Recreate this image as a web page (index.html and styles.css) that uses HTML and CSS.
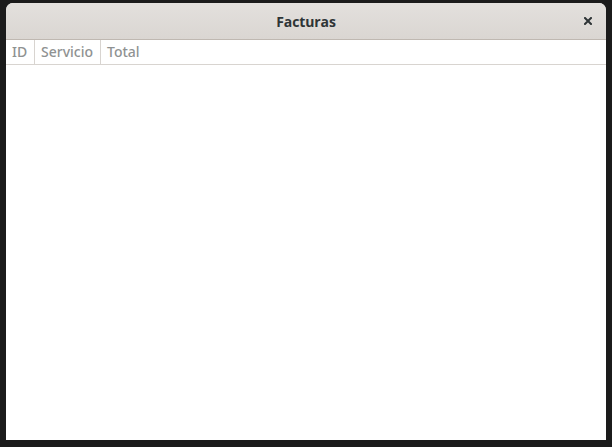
FILE: index.html
```html
<!DOCTYPE html>
<html>
<head>
<meta charset="utf-8">
<link rel="stylesheet" href="styles.css">
</head>
<body>
<div class="desktop">
  <div class="window">
    <div class="titlebar">
      <span class="title">Facturas</span>
      <button class="close" aria-label="Cerrar">
        <svg width="8" height="8" viewBox="0 0 8 8"><path d="M1 1 L7 7 M7 1 L1 7" stroke="#2e3436" stroke-width="2" stroke-linecap="square"/></svg>
      </button>
    </div>
    <div class="table">
      <div class="thead">
        <div class="th col-id">ID</div>
        <div class="th col-serv">Servicio</div>
        <div class="th col-total">Total</div>
      </div>
      <div class="tbody"></div>
    </div>
  </div>
</div>
</body>
</html>
```
FILE: styles.css
```css
html, body {
  margin: 0;
  padding: 0;
  width: 612px;
  height: 447px;
  overflow: hidden;
  background: #1b1b1b;
}
.desktop {
  padding: 3px 6px 7px 6px;
  height: 447px;
  box-sizing: border-box;
}
.window {
  width: 600px;
  height: 437px;
  display: flex;
  flex-direction: column;
  background: #ffffff;
  border-radius: 7px 7px 0 0;
  overflow: hidden;
}
.titlebar {
  height: 36px;
  flex: none;
  display: flex;
  align-items: center;
  justify-content: center;
  position: relative;
  background: linear-gradient(#e3e0dd, #dad6d2);
  border-bottom: 1px solid #bfb8b1;
}
.title {
  font-family: "Open Sans", "DejaVu Sans", sans-serif;
  font-weight: 700;
  font-size: 14px;
  color: #2e3436;
  letter-spacing: -0.1px;
}
.close {
  position: absolute;
  right: 14px;
  top: 14px;
  width: 8px;
  height: 8px;
  padding: 0;
  border: 0;
  background: none;
  display: flex;
}
.table {
  flex: 1;
  display: flex;
  flex-direction: column;
}
.thead {
  height: 24px;
  display: flex;
  border-bottom: 1px solid #d8d4d0;
  box-sizing: content-box;
}
.th {
  font-family: "Noto Sans", "Open Sans", sans-serif;
  font-weight: 500;
  font-size: 14px;
  color: #8f9292;
  line-height: 24px;
  padding-left: 6px;
  box-sizing: border-box;
}
.col-id {
  width: 29px;
  border-right: 1px solid #d8d4d0;
}
.col-serv {
  width: 66px;
  border-right: 1px solid #d8d4d0;
}
.col-total {
  flex: 1;
}
.tbody {
  flex: 1;
}
```
